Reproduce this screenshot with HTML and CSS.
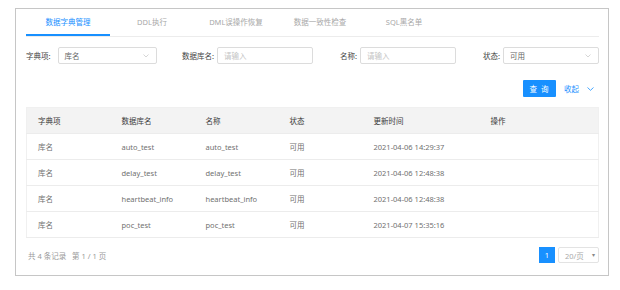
FILE: index.html
```html
<!DOCTYPE html>
<html lang="zh">
<head>
<meta charset="utf-8">
<link rel="stylesheet" href="styles.css">
</head>
<body>
<div class="frame">
  <div class="tabs">
    <div class="tab active">数据字典管理</div>
    <div class="tab">DDL执行</div>
    <div class="tab">DML误操作恢复</div>
    <div class="tab">数据一致性检查</div>
    <div class="tab">SQL黑名单</div>
  </div>

  <div class="filters">
    <div class="field first">
      <span class="label">字典项:</span>
      <div class="control select wide"><span>库名</span><svg class="chev" width="6" height="4" viewBox="0 0 6 4"><path d="M0.5 0.5 L3 3 L5.5 0.5" fill="none" stroke="#c4c4c4" stroke-width="0.7"/></svg></div>
    </div>
    <div class="field">
      <span class="label">数据库名:</span>
      <div class="control"><span class="ph">请输入</span></div>
    </div>
    <div class="field">
      <span class="label">名称:</span>
      <div class="control"><span class="ph">请输入</span></div>
    </div>
    <div class="field">
      <span class="label">状态:</span>
      <div class="control select"><span>可用</span><svg class="chev" width="6" height="4" viewBox="0 0 6 4"><path d="M0.5 0.5 L3 3 L5.5 0.5" fill="none" stroke="#c4c4c4" stroke-width="0.7"/></svg></div>
    </div>
  </div>

  <div class="actions">
    <button class="btn-primary">查 询</button>
    <span class="collapse">收起<svg class="chev-blue" width="7" height="4" viewBox="0 0 7 4"><path d="M0.5 0.5 L3.5 3.3 L6.5 0.5" fill="none" stroke="#1890ff" stroke-width="0.8"/></svg></span>
  </div>

  <table class="grid">
    <colgroup>
      <col class="c84"><col class="c84"><col class="c84"><col class="c84"><col class="c117"><col>
    </colgroup>
    <thead>
      <tr><th>字典项</th><th>数据库名</th><th>名称</th><th>状态</th><th>更新时间</th><th>操作</th></tr>
    </thead>
    <tbody>
      <tr><td>库名</td><td>auto_test</td><td>auto_test</td><td>可用</td><td>2021-04-06 14:29:37</td><td></td></tr>
      <tr><td>库名</td><td>delay_test</td><td>delay_test</td><td>可用</td><td>2021-04-06 12:48:38</td><td></td></tr>
      <tr><td>库名</td><td>heartbeat_info</td><td>heartbeat_info</td><td>可用</td><td>2021-04-06 12:48:38</td><td></td></tr>
      <tr><td>库名</td><td>poc_test</td><td>poc_test</td><td>可用</td><td>2021-04-07 15:35:16</td><td></td></tr>
    </tbody>
  </table>

  <div class="footer">
    <span class="summary">共 4 条记录&nbsp;&nbsp;&nbsp;第 1 / 1 页</span>
    <div class="pager">
      <span class="page current">1</span>
      <span class="size">20/页<span class="tri">▾</span></span>
    </div>
  </div>
</div>
</body>
</html>
```

FILE: styles.css
```css
* { box-sizing: border-box; }
html, body { margin: 0; background: #fff; }
body {
  padding: 8px 11px 0 15px;
  font-family: "Noto Sans", "Noto Sans CJK SC", sans-serif;
  font-size: 7.5px;
  color: #707070;
}
.frame {
  width: 594px;
  height: 268px;
  border: 1px solid #c6c6c6;
  padding: 0 9px 0 10px;
}
.tabs {
  display: flex;
  height: 28px;
  border-bottom: 1px solid #ececec;
}
.tab {
  width: 84px;
  text-align: center;
  line-height: 27px;
  color: #a8a8a8;
}
.tab.active {
  color: #1890ff;
  box-shadow: inset 0 -2px 0 #1890ff;
}
.filters {
  display: grid;
  grid-template-columns: 143px 144px 143px 143px;
  margin-top: 10px;
  height: 17px;
}
.field {
  display: flex;
  align-items: center;
  justify-content: flex-end;
}
.field.first { justify-content: flex-start; padding-right: 12px; }
.label { color: #444; margin-right: 3px; white-space: nowrap; }
.field.first .label { margin-right: 7px; }
.control {
  width: 96px;
  height: 17px;
  border: 1px solid #dcdcdc;
  border-radius: 2px;
  display: flex;
  align-items: center;
  justify-content: space-between;
  padding: 0 7px 0 6px;
  color: #666;
}
.control.wide { width: 99px; }
.ph { color: #c4c4c4; }
.chev { display: block; }
.actions {
  display: flex;
  justify-content: flex-end;
  align-items: center;
  margin-top: 16px;
  height: 17px;
  padding-right: 5px;
}
.btn-primary {
  width: 33px;
  height: 17px;
  border: 0;
  border-radius: 1px;
  background: #1890ff;
  color: #fff;
  font: inherit;
  letter-spacing: 1px;
  padding: 0;
}
.collapse {
  color: #1890ff;
  margin-left: 8px;
  display: flex;
  align-items: center;
}
.chev-blue { margin-left: 8px; }
.grid {
  width: 573px;
  margin-top: 10px;
  border-collapse: collapse;
  table-layout: fixed;
  border: 1px solid #f0f0f0;
}
.c84 { width: 84px; }
.c117 { width: 117px; }
.grid th, .grid td {
  height: 26px;
  padding: 0 0 0 11px;
  text-align: left;
  font-weight: normal;
  white-space: nowrap;
  border-bottom: 1px solid #ececec;
}
.grid th { background: #f3f3f3; color: #3a3a3a; }
.grid td { color: #707070; }
.footer {
  display: flex;
  justify-content: space-between;
  align-items: center;
  margin-top: 9px;
  height: 16px;
}
.summary { color: #9a9a9a; padding-left: 2px; }
.pager { display: flex; align-items: center; }
.page.current {
  width: 16px;
  height: 16px;
  line-height: 16px;
  text-align: center;
  background: #1890ff;
  color: #fff;
}
.size {
  width: 41px;
  height: 16px;
  margin-left: 3px;
  border: 1px solid #e3e3e3;
  border-radius: 2px;
  display: flex;
  align-items: center;
  justify-content: space-between;
  padding: 0 3px 0 6px;
  color: #aaa;
}
.tri { font-size: 6px; color: #888; }
```
